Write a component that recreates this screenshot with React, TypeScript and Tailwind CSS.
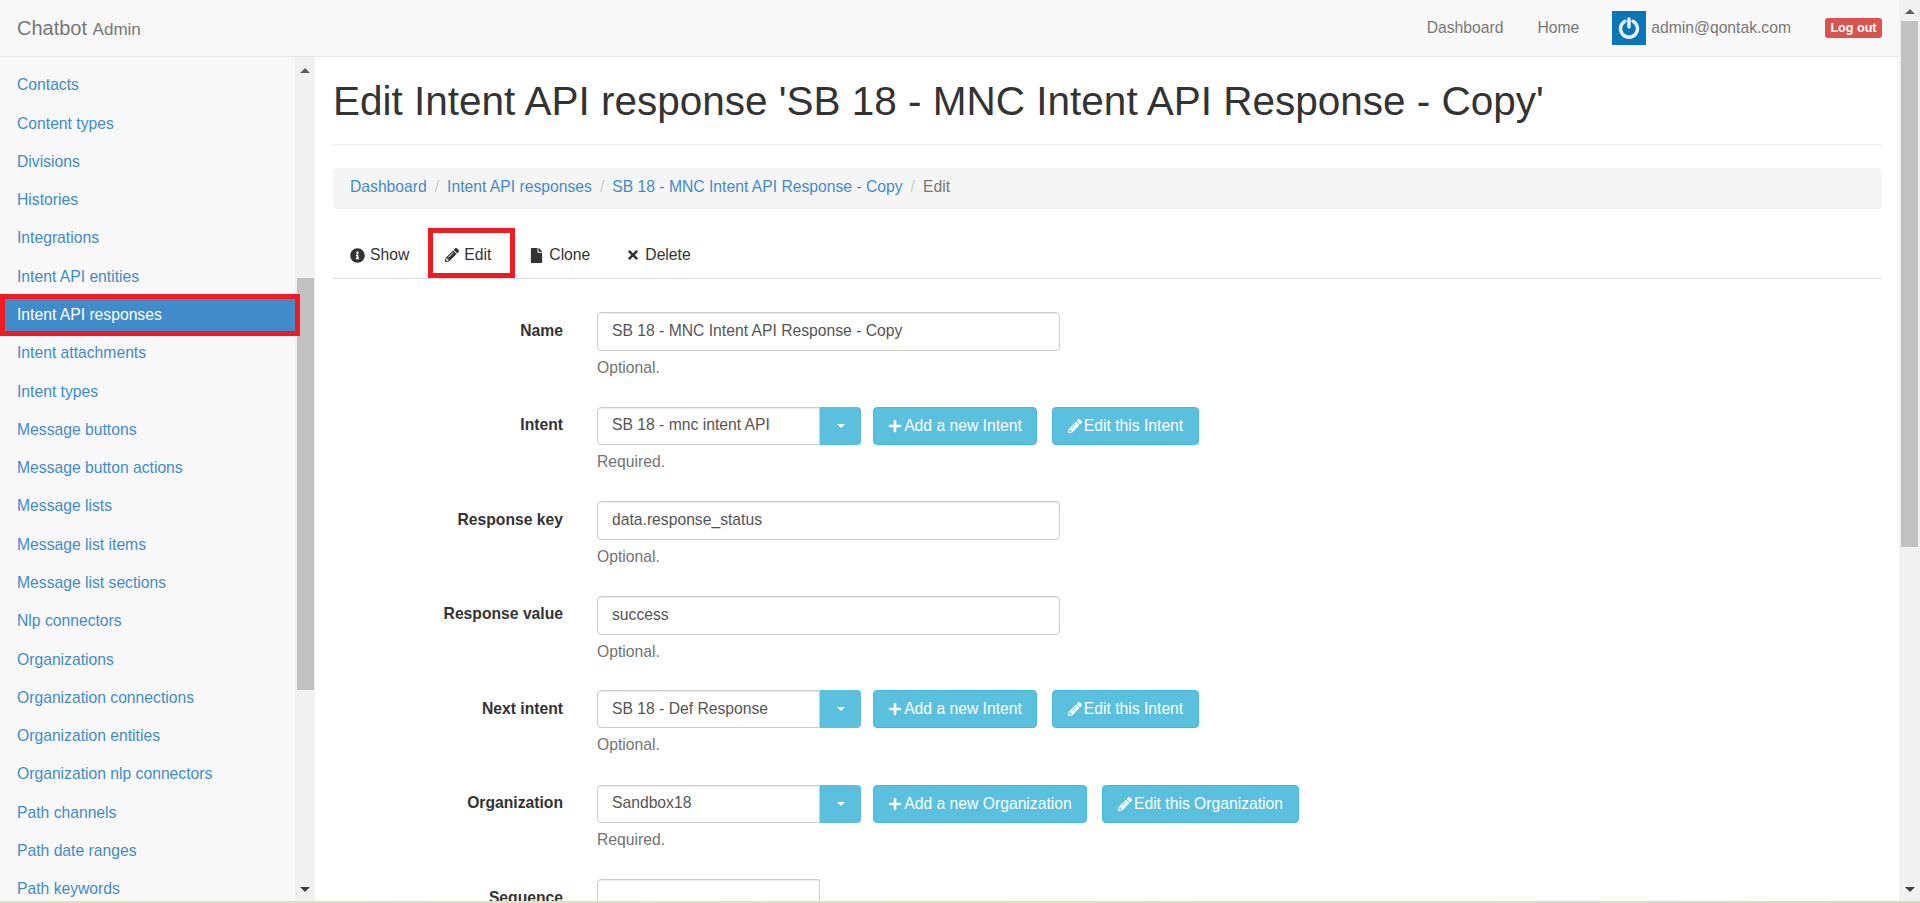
import { FaFile, FaInfoCircle, FaPencilAlt, FaPlus, FaTimes } from "react-icons/fa";

const sidebarItems = [
  "Contacts",
  "Content types",
  "Divisions",
  "Histories",
  "Integrations",
  "Intent API entities",
  "Intent API responses",
  "Intent attachments",
  "Intent types",
  "Message buttons",
  "Message button actions",
  "Message lists",
  "Message list items",
  "Message list sections",
  "Nlp connectors",
  "Organizations",
  "Organization connections",
  "Organization entities",
  "Organization nlp connectors",
  "Path channels",
  "Path date ranges",
  "Path keywords",
];

function ArrowUp() {
  return <div className="h-0 w-0 border-x-[5px] border-b-[5px] border-x-transparent border-b-[#606060]" />;
}

function ArrowDown() {
  return <div className="h-0 w-0 border-x-[5px] border-t-[5px] border-x-transparent border-t-[#404040]" />;
}

function Navbar() {
  return (
    <div className="flex h-[57px] shrink-0 items-center border-b border-[#e7e7e7] bg-[#f8f8f8] pl-[17px] pr-[17px] text-[#777]">
      <div className="flex-1 text-[20px]">
        Chatbot <span className="text-[17px]">Admin</span>
      </div>
      <span className="text-[15.7px]">Dashboard</span>
      <span className="ml-[34px] text-[15.7px]">Home</span>
      <div className="ml-[33px] flex h-[34px] w-[34px] items-center justify-center bg-[#0a75b8]">
        <svg width="24" height="24" viewBox="0 0 24 24" fill="none" stroke="#e6f1f8" strokeWidth="3.4">
          <path d="M8 5.2a8.5 8.5 0 1 0 8 0" strokeLinecap="round" />
          <path d="M12 3v8" strokeLinecap="round" />
        </svg>
      </div>
      <span className="ml-[5px] text-[15.7px]">admin@qontak.com</span>
      <span className="ml-[34px] flex h-[20px] w-[57px] items-center justify-center rounded-[3px] bg-[#d9534f] text-[12.6px] font-bold text-white">
        Log out
      </span>
    </div>
  );
}

function Sidebar() {
  return (
    <div className="relative flex w-[315px] shrink-0 overflow-hidden bg-[#f8f8f8]">
      <div className="w-[295px] shrink-0 pt-[9px]">
        {sidebarItems.map((item) =>
          item === "Intent API responses" ? (
            <div key={item} className="flex h-[38.29px] items-center bg-[#428bca] pl-[17px] text-[15.7px] text-white">
              {item}
            </div>
          ) : (
            <div key={item} className="flex h-[38.29px] items-center pl-[17px] text-[15.7px] text-[#428bca]">
              {item}
            </div>
          ),
        )}
      </div>
      <div className="flex w-[20px] shrink-0 flex-col items-center bg-[#f1f1f1]">
        <div className="mt-[11px]">
          <ArrowUp />
        </div>
        <div className="mt-[205px] h-[412px] w-[17px] bg-[#c1c1c1]" />
        <div className="mt-auto mb-[9px]">
          <ArrowDown />
        </div>
      </div>
      {/* red annotation round the selected row */}
      <div className="pointer-events-none absolute left-0 top-[237px] h-[42px] w-[300px] border-[5px] border-[#ed1c24]" />
    </div>
  );
}

function Tab({ icon, label }: { icon: React.ReactNode; label: string }) {
  return (
    <div className="flex h-[50px] items-center gap-[5px] px-[17px] pt-[2px] text-[15.7px] text-[#333]">
      {icon}
      <span>{label}</span>
    </div>
  );
}

function Field({ label, value, help, wide = true, children }: {
  label: string;
  value: string;
  help: string;
  wide?: boolean;
  children?: React.ReactNode;
}) {
  return (
    <div className="flex h-[94.5px] shrink-0 items-start">
      <div className="flex h-[37px] w-[230px] shrink-0 items-center justify-end text-[15.7px] font-bold text-[#333]">
        {label}
      </div>
      <div className="ml-[34px]">
        <div className="flex items-start">
          <div
            className={`flex items-center border border-[#ccc] bg-white pb-[1px] pl-[14px] text-[15.7px] text-[#555] shadow-[inset_0_1px_1px_rgba(0,0,0,0.075)] ${
              wide ? "h-[39px] w-[463px] rounded-[4px]" : "h-[38px] w-[223px] rounded-l-[4px]"
            }`}
          >
            {value}
          </div>
          {children}
        </div>
        <div className="mt-[5px] text-[15.7px] text-[#737373]">{help}</div>
      </div>
    </div>
  );
}

function InfoButton({ icon, label, width, className = "" }: {
  icon: React.ReactNode;
  label: string;
  width: string;
  className?: string;
}) {
  return (
    <div
      className={`flex h-[38px] items-center justify-center gap-[2px] rounded-[4px] border border-[#46b8da] bg-[#5bc0de] text-[15.7px] text-white ${width} ${className}`}
    >
      {icon}
      <span>{label}</span>
    </div>
  );
}

function Picker({ noun, addW, editW }: { noun: string; addW: string; editW: string }) {
  return (
    <>
      <div className="flex h-[38px] w-[41px] items-center justify-center rounded-r-[4px] bg-[#5bc0de]">
        <div className="h-0 w-0 border-x-[4px] border-t-[4px] border-x-transparent border-t-white" />
      </div>
      <InfoButton icon={<FaPlus size={14} />} label={`Add a new ${noun}`} width={addW} className="ml-[12px]" />
      <InfoButton icon={<FaPencilAlt size={14} />} label={`Edit this ${noun}`} width={editW} className="ml-[15px]" />
    </>
  );
}

export default function App() {
  return (
    <div className="flex h-screen flex-col overflow-hidden bg-white font-['Liberation_Sans',Arial,sans-serif]">
      <div className="flex min-h-0 flex-1">
        <div className="flex min-w-0 flex-1 flex-col">
          <Navbar />
          <div className="flex min-h-0 flex-1">
            <Sidebar />
            <div className="min-w-0 flex-1 overflow-hidden pl-[18px] pr-[17px]">
              <h1 className="flex h-[88px] items-center border-b border-[#eee] pt-[2px] text-[40.5px] leading-none text-[#333]">
                Edit Intent API response 'SB 18 - MNC Intent API Response - Copy'
              </h1>
              <div className="mt-[23px] flex h-[41px] items-center rounded-[4px] bg-[#f5f5f5] pb-[3px] pl-[17px] text-[15.7px]">
                <span className="text-[#428bca]">Dashboard</span>
                <span className="px-[8px] text-[#ccc]">/</span>
                <span className="text-[#428bca]">Intent API responses</span>
                <span className="px-[8px] text-[#ccc]">/</span>
                <span className="text-[#428bca]">SB 18 - MNC Intent API Response - Copy</span>
                <span className="px-[8px] text-[#ccc]">/</span>
                <span className="text-[#777]">Edit</span>
              </div>
              <div className="relative mt-[20px] flex h-[50px] border-b border-[#ddd]">
                <Tab icon={<FaInfoCircle size={15} />} label="Show" />
                <div className="ml-[2px]">
                  <Tab icon={<FaPencilAlt size={14} />} label="Edit" />
                </div>
                <div className="ml-[4px]">
                  <Tab icon={<FaFile size={15} />} label="Clone" />
                </div>
                <div className="ml-[2px]">
                  <Tab icon={<FaTimes size={14} />} label="Delete" />
                </div>
                {/* red annotation round the Edit tab */}
                <div className="pointer-events-none absolute left-[95px] -top-[1px] h-[50px] w-[87px] border-[5px] border-[#ed1c24]" />
              </div>
              <div className="mt-[33px] flex flex-col">
                <Field label="Name" value="SB 18 - MNC Intent API Response - Copy" help="Optional." />
                <Field label="Intent" value="SB 18 - mnc intent API" help="Required." wide={false}>
                  <Picker noun="Intent" addW="w-[164px]" editW="w-[147px]" />
                </Field>
                <Field label="Response key" value="data.response_status" help="Optional." />
                <Field label="Response value" value="success" help="Optional." />
                <Field label="Next intent" value="SB 18 - Def Response" help="Optional." wide={false}>
                  <Picker noun="Intent" addW="w-[164px]" editW="w-[147px]" />
                </Field>
                <Field label="Organization" value="Sandbox18" help="Required." wide={false}>
                  <Picker noun="Organization" addW="w-[214px]" editW="w-[197px]" />
                </Field>
                <Field label="Sequence" value="" help="" wide={false} />
              </div>
            </div>
          </div>
        </div>
        <div className="flex w-[21px] shrink-0 flex-col items-center bg-[#f1f1f1]">
          <div className="mt-[9px]">
            <ArrowUp />
          </div>
          <div className="mt-[7px] h-[526px] w-[17px] bg-[#c1c1c1]" />
          <div className="mt-auto mb-[9px]">
            <ArrowDown />
          </div>
        </div>
      </div>
      <div className="h-[2px] shrink-0 bg-gradient-to-r from-[#dfe3b8] via-[#dfe6a0] to-[#d8dcb0]" />
    </div>
  );
}
